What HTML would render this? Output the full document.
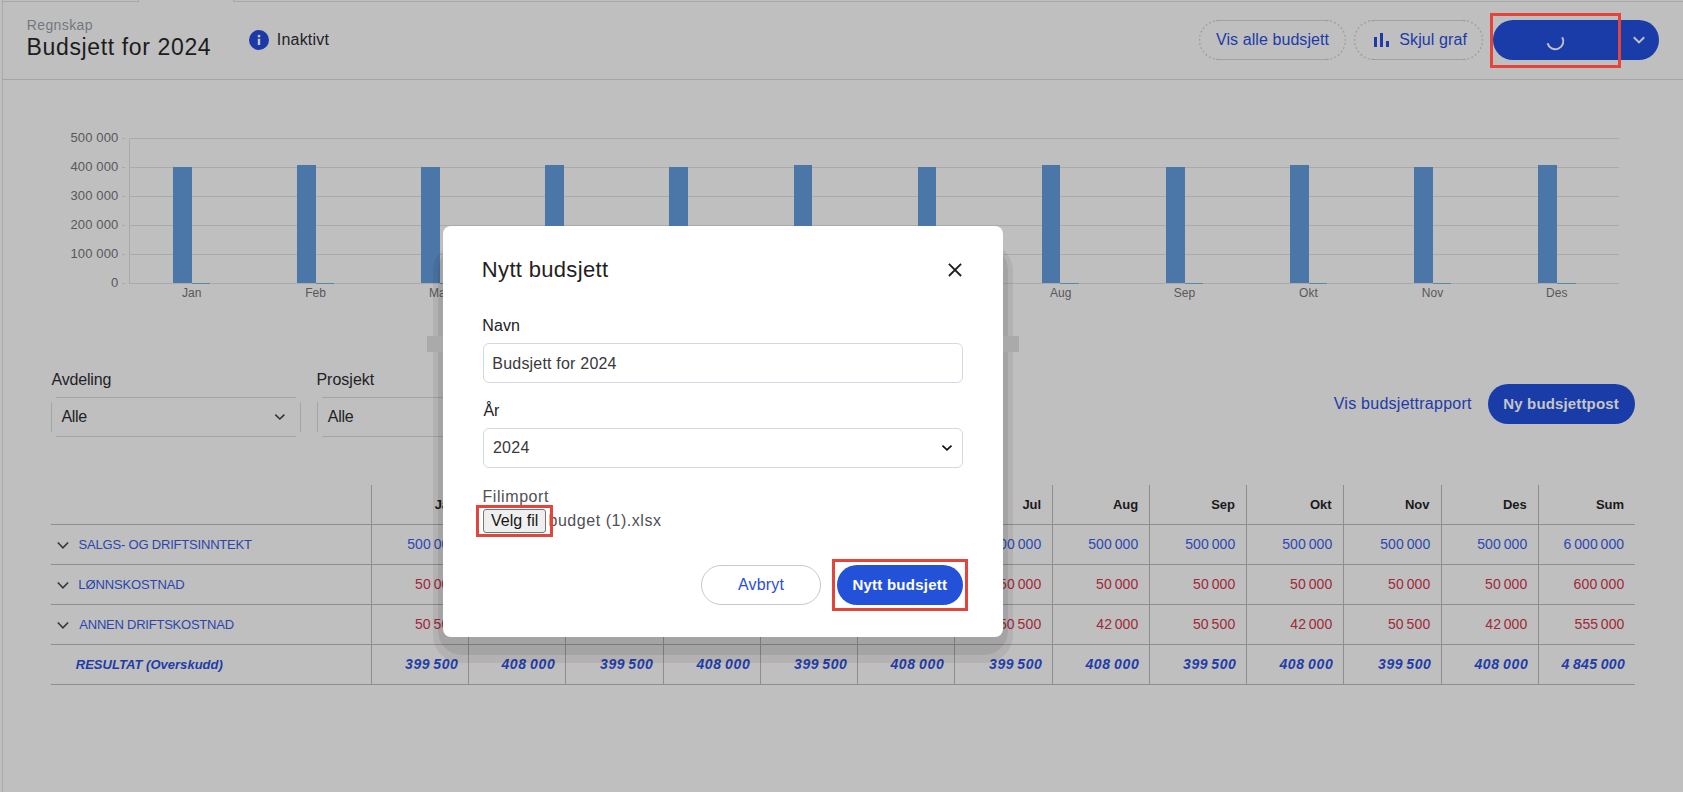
<!DOCTYPE html>
<html><head><meta charset="utf-8"><title>Budsjett</title>
<style>
html,body{margin:0;padding:0;}
body{width:1683px;height:792px;overflow:hidden;position:relative;background:#bfbfbf;font-family:"Liberation Sans",sans-serif;}
.t{position:absolute;white-space:nowrap;}
.r{position:absolute;}
</style></head><body>
<div class="r" style="left:2.00px;top:0.00px;width:1.00px;height:792.00px;background:#a9a9a9;border-radius:0px;"></div>
<div class="r" style="left:2.00px;top:1.00px;width:137.00px;height:1.00px;background:#a7a7a7;border-radius:0px;"></div>
<div class="r" style="left:138.00px;top:0.00px;width:1.00px;height:2.00px;background:#a7a7a7;border-radius:0px;"></div>
<div class="r" style="left:233.00px;top:1.00px;width:1450.00px;height:1.00px;background:#a7a7a7;border-radius:0px;"></div>
<div class="r" style="left:233.00px;top:0.00px;width:1.00px;height:2.00px;background:#a7a7a7;border-radius:0px;"></div>
<div class="r" style="left:2.00px;top:79.00px;width:1681.00px;height:1.00px;background:#a5a5a5;border-radius:0px;"></div>
<div class="t" style="left:26.70px;top:18px;font-size:14px;line-height:14px;color:#737881;font-weight:normal;font-style:normal;letter-spacing:0.400px;">Regnskap</div>
<div class="t" style="left:26.55px;top:36px;font-size:23px;line-height:23px;color:#1c1c1e;font-weight:normal;font-style:normal;letter-spacing:0.637px;">Budsjett for 2024</div>
<svg class="r" style="left:249px;top:30px" width="20" height="20" viewBox="0 0 20 20"><circle cx="10" cy="10" r="10" fill="#1b3aa8"/><rect x="8.8" y="4.9" width="2.4" height="2.4" fill="#c4c4c4"/><rect x="8.8" y="8.7" width="2.4" height="6.3" fill="#c4c4c4"/></svg>
<div class="t" style="left:276.75px;top:32px;font-size:16px;line-height:16px;color:#222226;font-weight:normal;font-style:normal;letter-spacing:0.214px;">Inaktivt</div>
<svg class="r" style="left:1199px;top:20px" width="147" height="40" viewBox="0 0 147 40"><path d="M 17.0 0.5 L 130.0 0.5 M 17.0 39.5 L 130.0 39.5" stroke="#a2a2a2" stroke-width="1" fill="none"/><path d="M 20.0 0.5 A 19.5 19.5 0 0 0 20.0 39.5 M 127.0 0.5 A 19.5 19.5 0 0 1 127.0 39.5" stroke="#9c9c9c" stroke-width="1.3" fill="none" stroke-dasharray="1.8 2.4"/></svg>
<div class="t" style="left:1216.00px;top:32px;font-size:16px;line-height:16px;color:#1d3aa8;font-weight:normal;font-style:normal;letter-spacing:0.078px;">Vis alle budsjett</div>
<svg class="r" style="left:1354px;top:20px" width="129" height="40" viewBox="0 0 129 40"><path d="M 17.0 0.5 L 112.0 0.5 M 17.0 39.5 L 112.0 39.5" stroke="#a2a2a2" stroke-width="1" fill="none"/><path d="M 20.0 0.5 A 19.5 19.5 0 0 0 20.0 39.5 M 109.0 0.5 A 19.5 19.5 0 0 1 109.0 39.5" stroke="#9c9c9c" stroke-width="1.3" fill="none" stroke-dasharray="1.8 2.4"/></svg>
<div class="r" style="left:1374.00px;top:36.70px;width:3.00px;height:10.30px;background:#1d3aa8;border-radius:0px;"></div>
<div class="r" style="left:1380.00px;top:33.00px;width:3.00px;height:14.00px;background:#1d3aa8;border-radius:0px;"></div>
<div class="r" style="left:1386.00px;top:40.80px;width:3.00px;height:6.20px;background:#1d3aa8;border-radius:0px;"></div>
<div class="t" style="left:1399.25px;top:32px;font-size:16px;line-height:16px;color:#1d3aa8;font-weight:normal;font-style:normal;letter-spacing:0.111px;">Skjul graf</div>
<div class="r" style="left:1493.00px;top:20.00px;width:166.00px;height:40.00px;background:#1a3ca8;border-radius:20px;"></div>
<svg class="r" style="left:1540px;top:26px" width="30" height="30" viewBox="0 0 30 30"><path d="M 22.2 11.2 A 8 8 0 1 1 7.57 17.27" fill="none" stroke="#c2c2c2" stroke-width="2"/></svg>
<svg class="r" style="left:1629px;top:30px" width="20" height="20" viewBox="0 0 20 20"><path d="M 4.8 7.2 L 10 12.4 L 15.2 7.2" fill="none" stroke="#c2c2c2" stroke-width="2"/></svg>
<div class="r" style="left:129.00px;top:138.00px;width:1490.00px;height:1.00px;background:#aaaaaa;border-radius:0px;"></div>
<div class="r" style="left:122.00px;top:138.00px;width:3.00px;height:1.00px;background:#aaaaaa;border-radius:0px;"></div>
<div class="t" style="left:70.40px;top:131px;font-size:13px;line-height:13px;color:#58585a;font-weight:normal;font-style:normal;letter-spacing:0.150px;">500 000</div>
<div class="r" style="left:129.00px;top:167.00px;width:1490.00px;height:1.00px;background:#aaaaaa;border-radius:0px;"></div>
<div class="r" style="left:122.00px;top:167.00px;width:3.00px;height:1.00px;background:#aaaaaa;border-radius:0px;"></div>
<div class="t" style="left:70.40px;top:160px;font-size:13px;line-height:13px;color:#58585a;font-weight:normal;font-style:normal;letter-spacing:0.150px;">400 000</div>
<div class="r" style="left:129.00px;top:196.00px;width:1490.00px;height:1.00px;background:#aaaaaa;border-radius:0px;"></div>
<div class="r" style="left:122.00px;top:196.00px;width:3.00px;height:1.00px;background:#aaaaaa;border-radius:0px;"></div>
<div class="t" style="left:70.40px;top:189px;font-size:13px;line-height:13px;color:#58585a;font-weight:normal;font-style:normal;letter-spacing:0.150px;">300 000</div>
<div class="r" style="left:129.00px;top:225.00px;width:1490.00px;height:1.00px;background:#aaaaaa;border-radius:0px;"></div>
<div class="r" style="left:122.00px;top:225.00px;width:3.00px;height:1.00px;background:#aaaaaa;border-radius:0px;"></div>
<div class="t" style="left:70.40px;top:218px;font-size:13px;line-height:13px;color:#58585a;font-weight:normal;font-style:normal;letter-spacing:0.150px;">200 000</div>
<div class="r" style="left:129.00px;top:254.00px;width:1490.00px;height:1.00px;background:#aaaaaa;border-radius:0px;"></div>
<div class="r" style="left:122.00px;top:254.00px;width:3.00px;height:1.00px;background:#aaaaaa;border-radius:0px;"></div>
<div class="t" style="left:70.40px;top:247px;font-size:13px;line-height:13px;color:#58585a;font-weight:normal;font-style:normal;letter-spacing:0.150px;">100 000</div>
<div class="r" style="left:129.00px;top:283.00px;width:1490.00px;height:1.00px;background:#aaaaaa;border-radius:0px;"></div>
<div class="r" style="left:122.00px;top:283.00px;width:3.00px;height:1.00px;background:#aaaaaa;border-radius:0px;"></div>
<div class="t" style="left:111.05px;top:276px;font-size:13px;line-height:13px;color:#58585a;font-weight:normal;font-style:normal;letter-spacing:0.150px;">0</div>
<div class="r" style="left:129.00px;top:138.00px;width:1.00px;height:146.00px;background:#aaaaaa;border-radius:0px;"></div>
<div class="r" style="left:172.96px;top:167.20px;width:18.60px;height:116.30px;background:#4a77a7;border-radius:0px;"></div>
<div class="r" style="left:191.56px;top:283.00px;width:18.60px;height:1.00px;background:#5a8aa0;border-radius:0px;"></div>
<div class="t" style="left:182.06px;top:287px;font-size:12px;line-height:12px;color:#58585a;font-weight:normal;font-style:normal;letter-spacing:0.000px;">Jan</div>
<div class="r" style="left:297.09px;top:164.70px;width:18.60px;height:118.80px;background:#4a77a7;border-radius:0px;"></div>
<div class="r" style="left:315.69px;top:283.00px;width:18.60px;height:1.00px;background:#5a8aa0;border-radius:0px;"></div>
<div class="t" style="left:305.19px;top:287px;font-size:12px;line-height:12px;color:#58585a;font-weight:normal;font-style:normal;letter-spacing:0.000px;">Feb</div>
<div class="r" style="left:421.21px;top:167.20px;width:18.60px;height:116.30px;background:#4a77a7;border-radius:0px;"></div>
<div class="r" style="left:439.81px;top:283.00px;width:18.60px;height:1.00px;background:#5a8aa0;border-radius:0px;"></div>
<div class="t" style="left:429.06px;top:287px;font-size:12px;line-height:12px;color:#58585a;font-weight:normal;font-style:normal;letter-spacing:0.000px;">Mar</div>
<div class="r" style="left:545.34px;top:164.70px;width:18.60px;height:118.80px;background:#4a77a7;border-radius:0px;"></div>
<div class="r" style="left:563.94px;top:283.00px;width:18.60px;height:1.00px;background:#5a8aa0;border-radius:0px;"></div>
<div class="t" style="left:554.56px;top:287px;font-size:12px;line-height:12px;color:#58585a;font-weight:normal;font-style:normal;letter-spacing:0.000px;">Apr</div>
<div class="r" style="left:669.46px;top:167.20px;width:18.60px;height:116.30px;background:#4a77a7;border-radius:0px;"></div>
<div class="r" style="left:688.06px;top:283.00px;width:18.60px;height:1.00px;background:#5a8aa0;border-radius:0px;"></div>
<div class="t" style="left:678.31px;top:287px;font-size:12px;line-height:12px;color:#58585a;font-weight:normal;font-style:normal;letter-spacing:0.000px;">Mai</div>
<div class="r" style="left:793.59px;top:164.70px;width:18.60px;height:118.80px;background:#4a77a7;border-radius:0px;"></div>
<div class="r" style="left:812.19px;top:283.00px;width:18.60px;height:1.00px;background:#5a8aa0;border-radius:0px;"></div>
<div class="t" style="left:802.69px;top:287px;font-size:12px;line-height:12px;color:#58585a;font-weight:normal;font-style:normal;letter-spacing:0.000px;">Jun</div>
<div class="r" style="left:917.71px;top:167.20px;width:18.60px;height:116.30px;background:#4a77a7;border-radius:0px;"></div>
<div class="r" style="left:936.31px;top:283.00px;width:18.60px;height:1.00px;background:#5a8aa0;border-radius:0px;"></div>
<div class="t" style="left:928.81px;top:287px;font-size:12px;line-height:12px;color:#58585a;font-weight:normal;font-style:normal;letter-spacing:0.000px;">Jul</div>
<div class="r" style="left:1041.84px;top:164.70px;width:18.60px;height:118.80px;background:#4a77a7;border-radius:0px;"></div>
<div class="r" style="left:1060.44px;top:283.00px;width:18.60px;height:1.00px;background:#5a8aa0;border-radius:0px;"></div>
<div class="t" style="left:1050.06px;top:287px;font-size:12px;line-height:12px;color:#58585a;font-weight:normal;font-style:normal;letter-spacing:0.000px;">Aug</div>
<div class="r" style="left:1165.96px;top:167.20px;width:18.60px;height:116.30px;background:#4a77a7;border-radius:0px;"></div>
<div class="r" style="left:1184.56px;top:283.00px;width:18.60px;height:1.00px;background:#5a8aa0;border-radius:0px;"></div>
<div class="t" style="left:1173.81px;top:287px;font-size:12px;line-height:12px;color:#58585a;font-weight:normal;font-style:normal;letter-spacing:0.000px;">Sep</div>
<div class="r" style="left:1290.09px;top:164.70px;width:18.60px;height:118.80px;background:#4a77a7;border-radius:0px;"></div>
<div class="r" style="left:1308.69px;top:283.00px;width:18.60px;height:1.00px;background:#5a8aa0;border-radius:0px;"></div>
<div class="t" style="left:1299.06px;top:287px;font-size:12px;line-height:12px;color:#58585a;font-weight:normal;font-style:normal;letter-spacing:0.000px;">Okt</div>
<div class="r" style="left:1414.21px;top:167.20px;width:18.60px;height:116.30px;background:#4a77a7;border-radius:0px;"></div>
<div class="r" style="left:1432.81px;top:283.00px;width:18.60px;height:1.00px;background:#5a8aa0;border-radius:0px;"></div>
<div class="t" style="left:1421.81px;top:287px;font-size:12px;line-height:12px;color:#58585a;font-weight:normal;font-style:normal;letter-spacing:0.000px;">Nov</div>
<div class="r" style="left:1538.34px;top:164.70px;width:18.60px;height:118.80px;background:#4a77a7;border-radius:0px;"></div>
<div class="r" style="left:1556.94px;top:283.00px;width:18.60px;height:1.00px;background:#5a8aa0;border-radius:0px;"></div>
<div class="t" style="left:1546.06px;top:287px;font-size:12px;line-height:12px;color:#58585a;font-weight:normal;font-style:normal;letter-spacing:0.000px;">Des</div>
<div class="t" style="left:51.60px;top:372px;font-size:16px;line-height:16px;color:#222226;font-weight:normal;font-style:normal;letter-spacing:-0.193px;">Avdeling</div>
<div class="r" style="left:56.00px;top:397.00px;width:240.00px;height:1.00px;background:#a5a5a5;border-radius:0px;"></div>
<div class="r" style="left:56.00px;top:436.00px;width:240.00px;height:1.00px;background:#a5a5a5;border-radius:0px;"></div>
<div class="r" style="left:51.00px;top:402.00px;width:1.00px;height:30.00px;background:#a5a5a5;border-radius:0px;"></div>
<div class="r" style="left:300.00px;top:402.00px;width:1.00px;height:30.00px;background:#a5a5a5;border-radius:0px;"></div>
<div class="t" style="left:61.40px;top:409px;font-size:16px;line-height:16px;color:#222226;font-weight:normal;font-style:normal;letter-spacing:-0.300px;">Alle</div>
<svg class="r" style="left:270px;top:407px" width="20" height="20" viewBox="0 0 20 20"><path d="M 5.3 7.7 L 9.85 12.0 L 14.4 7.7" fill="none" stroke="#333" stroke-width="1.6"/></svg>
<div class="t" style="left:316.45px;top:372px;font-size:16px;line-height:16px;color:#222226;font-weight:normal;font-style:normal;letter-spacing:0.000px;">Prosjekt</div>
<div class="r" style="left:322.00px;top:397.00px;width:240.00px;height:1.00px;background:#a5a5a5;border-radius:0px;"></div>
<div class="r" style="left:322.00px;top:436.00px;width:240.00px;height:1.00px;background:#a5a5a5;border-radius:0px;"></div>
<div class="r" style="left:317.00px;top:402.00px;width:1.00px;height:30.00px;background:#a5a5a5;border-radius:0px;"></div>
<div class="r" style="left:566.00px;top:402.00px;width:1.00px;height:30.00px;background:#a5a5a5;border-radius:0px;"></div>
<div class="t" style="left:327.80px;top:409px;font-size:16px;line-height:16px;color:#222226;font-weight:normal;font-style:normal;letter-spacing:-0.300px;">Alle</div>
<div class="t" style="left:1333.70px;top:396px;font-size:16px;line-height:16px;color:#1d3aa8;font-weight:normal;font-style:normal;letter-spacing:0.261px;">Vis budsjettrapport</div>
<div class="r" style="left:1488.00px;top:384.00px;width:147.00px;height:40.00px;background:#1a3ca8;border-radius:20px;"></div>
<div class="t" style="left:1503.30px;top:396px;font-size:15px;line-height:15px;color:#c6c6c6;font-weight:bold;font-style:normal;letter-spacing:0.146px;">Ny budsjettpost</div>
<div class="r" style="left:51.00px;top:524.00px;width:1584.00px;height:1.00px;background:#8e8e8e;border-radius:0px;"></div>
<div class="r" style="left:51.00px;top:564.00px;width:1584.00px;height:1.00px;background:#8e8e8e;border-radius:0px;"></div>
<div class="r" style="left:51.00px;top:604.00px;width:1584.00px;height:1.00px;background:#8e8e8e;border-radius:0px;"></div>
<div class="r" style="left:51.00px;top:644.00px;width:1584.00px;height:1.00px;background:#8e8e8e;border-radius:0px;"></div>
<div class="r" style="left:51.00px;top:684.00px;width:1584.00px;height:1.00px;background:#8e8e8e;border-radius:0px;"></div>
<div class="r" style="left:371.00px;top:485.00px;width:1.00px;height:199.00px;background:#8e8e8e;border-radius:0px;"></div>
<div class="r" style="left:468.00px;top:485.00px;width:1.00px;height:199.00px;background:#8e8e8e;border-radius:0px;"></div>
<div class="r" style="left:565.00px;top:485.00px;width:1.00px;height:199.00px;background:#8e8e8e;border-radius:0px;"></div>
<div class="r" style="left:663.00px;top:485.00px;width:1.00px;height:199.00px;background:#8e8e8e;border-radius:0px;"></div>
<div class="r" style="left:760.00px;top:485.00px;width:1.00px;height:199.00px;background:#8e8e8e;border-radius:0px;"></div>
<div class="r" style="left:857.00px;top:485.00px;width:1.00px;height:199.00px;background:#8e8e8e;border-radius:0px;"></div>
<div class="r" style="left:954.00px;top:485.00px;width:1.00px;height:199.00px;background:#8e8e8e;border-radius:0px;"></div>
<div class="r" style="left:1052.00px;top:485.00px;width:1.00px;height:199.00px;background:#8e8e8e;border-radius:0px;"></div>
<div class="r" style="left:1149.00px;top:485.00px;width:1.00px;height:199.00px;background:#8e8e8e;border-radius:0px;"></div>
<div class="r" style="left:1246.00px;top:485.00px;width:1.00px;height:199.00px;background:#8e8e8e;border-radius:0px;"></div>
<div class="r" style="left:1343.00px;top:485.00px;width:1.00px;height:199.00px;background:#8e8e8e;border-radius:0px;"></div>
<div class="r" style="left:1441.00px;top:485.00px;width:1.00px;height:199.00px;background:#8e8e8e;border-radius:0px;"></div>
<div class="r" style="left:1538.00px;top:485.00px;width:1.00px;height:199.00px;background:#8e8e8e;border-radius:0px;"></div>
<div class="t" style="left:434.65px;top:498px;font-size:13px;line-height:13px;color:#1a1a1c;font-weight:bold;font-style:normal;letter-spacing:0.000px;">Jan</div>
<div class="t" style="left:530.65px;top:498px;font-size:13px;line-height:13px;color:#1a1a1c;font-weight:bold;font-style:normal;letter-spacing:0.000px;">Feb</div>
<div class="t" style="left:628.40px;top:498px;font-size:13px;line-height:13px;color:#1a1a1c;font-weight:bold;font-style:normal;letter-spacing:0.000px;">Mar</div>
<div class="t" style="left:726.15px;top:498px;font-size:13px;line-height:13px;color:#1a1a1c;font-weight:bold;font-style:normal;letter-spacing:0.000px;">Apr</div>
<div class="t" style="left:824.40px;top:498px;font-size:13px;line-height:13px;color:#1a1a1c;font-weight:bold;font-style:normal;letter-spacing:0.000px;">Mai</div>
<div class="t" style="left:919.90px;top:498px;font-size:13px;line-height:13px;color:#1a1a1c;font-weight:bold;font-style:normal;letter-spacing:0.000px;">Jun</div>
<div class="t" style="left:1022.40px;top:498px;font-size:13px;line-height:13px;color:#1a1a1c;font-weight:bold;font-style:normal;letter-spacing:0.000px;">Jul</div>
<div class="t" style="left:1112.90px;top:498px;font-size:13px;line-height:13px;color:#1a1a1c;font-weight:bold;font-style:normal;letter-spacing:0.000px;">Aug</div>
<div class="t" style="left:1211.15px;top:498px;font-size:13px;line-height:13px;color:#1a1a1c;font-weight:bold;font-style:normal;letter-spacing:0.000px;">Sep</div>
<div class="t" style="left:1309.90px;top:498px;font-size:13px;line-height:13px;color:#1a1a1c;font-weight:bold;font-style:normal;letter-spacing:0.000px;">Okt</div>
<div class="t" style="left:1404.90px;top:498px;font-size:13px;line-height:13px;color:#1a1a1c;font-weight:bold;font-style:normal;letter-spacing:0.000px;">Nov</div>
<div class="t" style="left:1502.90px;top:498px;font-size:13px;line-height:13px;color:#1a1a1c;font-weight:bold;font-style:normal;letter-spacing:0.000px;">Des</div>
<div class="t" style="left:1595.90px;top:498px;font-size:13px;line-height:13px;color:#1a1a1c;font-weight:bold;font-style:normal;letter-spacing:0.000px;">Sum</div>
<svg class="r" style="left:53px;top:534px" width="20" height="20" viewBox="0 0 20 20"><path d="M 4.8 8.5 L 9.95 13.8 L 15.1 8.5" fill="none" stroke="#3a3a3a" stroke-width="1.7"/></svg>
<div class="t" style="left:78.55px;top:538px;font-size:13px;line-height:13px;color:#2a46ae;font-weight:normal;font-style:normal;letter-spacing:-0.193px;">SALGS- OG DRIFTSINNTEKT</div>
<div class="t" style="left:407.20px;top:537px;font-size:14px;line-height:14px;color:#2b48b2;font-weight:normal;font-style:normal;letter-spacing:0.083px;">500 000</div>
<div class="t" style="left:504.20px;top:537px;font-size:14px;line-height:14px;color:#2b48b2;font-weight:normal;font-style:normal;letter-spacing:0.083px;">500 000</div>
<div class="t" style="left:602.20px;top:537px;font-size:14px;line-height:14px;color:#2b48b2;font-weight:normal;font-style:normal;letter-spacing:0.083px;">500 000</div>
<div class="t" style="left:699.20px;top:537px;font-size:14px;line-height:14px;color:#2b48b2;font-weight:normal;font-style:normal;letter-spacing:0.083px;">500 000</div>
<div class="t" style="left:796.20px;top:537px;font-size:14px;line-height:14px;color:#2b48b2;font-weight:normal;font-style:normal;letter-spacing:0.083px;">500 000</div>
<div class="t" style="left:893.20px;top:537px;font-size:14px;line-height:14px;color:#2b48b2;font-weight:normal;font-style:normal;letter-spacing:0.083px;">500 000</div>
<div class="t" style="left:991.20px;top:537px;font-size:14px;line-height:14px;color:#2b48b2;font-weight:normal;font-style:normal;letter-spacing:0.083px;">500 000</div>
<div class="t" style="left:1088.20px;top:537px;font-size:14px;line-height:14px;color:#2b48b2;font-weight:normal;font-style:normal;letter-spacing:0.083px;">500 000</div>
<div class="t" style="left:1185.20px;top:537px;font-size:14px;line-height:14px;color:#2b48b2;font-weight:normal;font-style:normal;letter-spacing:0.083px;">500 000</div>
<div class="t" style="left:1282.20px;top:537px;font-size:14px;line-height:14px;color:#2b48b2;font-weight:normal;font-style:normal;letter-spacing:0.083px;">500 000</div>
<div class="t" style="left:1380.20px;top:537px;font-size:14px;line-height:14px;color:#2b48b2;font-weight:normal;font-style:normal;letter-spacing:0.083px;">500 000</div>
<div class="t" style="left:1477.20px;top:537px;font-size:14px;line-height:14px;color:#2b48b2;font-weight:normal;font-style:normal;letter-spacing:0.083px;">500 000</div>
<div class="t" style="left:1563.50px;top:537px;font-size:14px;line-height:14px;color:#2b48b2;font-weight:normal;font-style:normal;letter-spacing:0.056px;">6 000 000</div>
<svg class="r" style="left:53px;top:574px" width="20" height="20" viewBox="0 0 20 20"><path d="M 4.8 8.5 L 9.95 13.8 L 15.1 8.5" fill="none" stroke="#3a3a3a" stroke-width="1.7"/></svg>
<div class="t" style="left:78.30px;top:578px;font-size:13px;line-height:13px;color:#2a46ae;font-weight:normal;font-style:normal;letter-spacing:-0.118px;">LØNNSKOSTNAD</div>
<div class="t" style="left:415.00px;top:577px;font-size:14px;line-height:14px;color:#a0283a;font-weight:normal;font-style:normal;letter-spacing:0.090px;">50 000</div>
<div class="t" style="left:512.00px;top:577px;font-size:14px;line-height:14px;color:#a0283a;font-weight:normal;font-style:normal;letter-spacing:0.090px;">50 000</div>
<div class="t" style="left:610.00px;top:577px;font-size:14px;line-height:14px;color:#a0283a;font-weight:normal;font-style:normal;letter-spacing:0.090px;">50 000</div>
<div class="t" style="left:707.00px;top:577px;font-size:14px;line-height:14px;color:#a0283a;font-weight:normal;font-style:normal;letter-spacing:0.090px;">50 000</div>
<div class="t" style="left:804.00px;top:577px;font-size:14px;line-height:14px;color:#a0283a;font-weight:normal;font-style:normal;letter-spacing:0.090px;">50 000</div>
<div class="t" style="left:901.00px;top:577px;font-size:14px;line-height:14px;color:#a0283a;font-weight:normal;font-style:normal;letter-spacing:0.090px;">50 000</div>
<div class="t" style="left:999.00px;top:577px;font-size:14px;line-height:14px;color:#a0283a;font-weight:normal;font-style:normal;letter-spacing:0.090px;">50 000</div>
<div class="t" style="left:1096.00px;top:577px;font-size:14px;line-height:14px;color:#a0283a;font-weight:normal;font-style:normal;letter-spacing:0.090px;">50 000</div>
<div class="t" style="left:1193.00px;top:577px;font-size:14px;line-height:14px;color:#a0283a;font-weight:normal;font-style:normal;letter-spacing:0.090px;">50 000</div>
<div class="t" style="left:1290.00px;top:577px;font-size:14px;line-height:14px;color:#a0283a;font-weight:normal;font-style:normal;letter-spacing:0.090px;">50 000</div>
<div class="t" style="left:1388.00px;top:577px;font-size:14px;line-height:14px;color:#a0283a;font-weight:normal;font-style:normal;letter-spacing:0.090px;">50 000</div>
<div class="t" style="left:1485.00px;top:577px;font-size:14px;line-height:14px;color:#a0283a;font-weight:normal;font-style:normal;letter-spacing:0.090px;">50 000</div>
<div class="t" style="left:1573.50px;top:577px;font-size:14px;line-height:14px;color:#a0283a;font-weight:normal;font-style:normal;letter-spacing:0.200px;">600 000</div>
<svg class="r" style="left:53px;top:614px" width="20" height="20" viewBox="0 0 20 20"><path d="M 4.8 8.5 L 9.95 13.8 L 15.1 8.5" fill="none" stroke="#3a3a3a" stroke-width="1.7"/></svg>
<div class="t" style="left:79.30px;top:618px;font-size:13px;line-height:13px;color:#2a46ae;font-weight:normal;font-style:normal;letter-spacing:-0.231px;">ANNEN DRIFTSKOSTNAD</div>
<div class="t" style="left:414.90px;top:617px;font-size:14px;line-height:14px;color:#a0283a;font-weight:normal;font-style:normal;letter-spacing:0.110px;">50 500</div>
<div class="t" style="left:512.35px;top:617px;font-size:14px;line-height:14px;color:#a0283a;font-weight:normal;font-style:normal;letter-spacing:0.020px;">42 000</div>
<div class="t" style="left:609.90px;top:617px;font-size:14px;line-height:14px;color:#a0283a;font-weight:normal;font-style:normal;letter-spacing:0.110px;">50 500</div>
<div class="t" style="left:707.35px;top:617px;font-size:14px;line-height:14px;color:#a0283a;font-weight:normal;font-style:normal;letter-spacing:0.020px;">42 000</div>
<div class="t" style="left:803.90px;top:617px;font-size:14px;line-height:14px;color:#a0283a;font-weight:normal;font-style:normal;letter-spacing:0.110px;">50 500</div>
<div class="t" style="left:901.35px;top:617px;font-size:14px;line-height:14px;color:#a0283a;font-weight:normal;font-style:normal;letter-spacing:0.020px;">42 000</div>
<div class="t" style="left:998.90px;top:617px;font-size:14px;line-height:14px;color:#a0283a;font-weight:normal;font-style:normal;letter-spacing:0.110px;">50 500</div>
<div class="t" style="left:1096.35px;top:617px;font-size:14px;line-height:14px;color:#a0283a;font-weight:normal;font-style:normal;letter-spacing:0.020px;">42 000</div>
<div class="t" style="left:1192.90px;top:617px;font-size:14px;line-height:14px;color:#a0283a;font-weight:normal;font-style:normal;letter-spacing:0.110px;">50 500</div>
<div class="t" style="left:1290.35px;top:617px;font-size:14px;line-height:14px;color:#a0283a;font-weight:normal;font-style:normal;letter-spacing:0.020px;">42 000</div>
<div class="t" style="left:1387.90px;top:617px;font-size:14px;line-height:14px;color:#a0283a;font-weight:normal;font-style:normal;letter-spacing:0.110px;">50 500</div>
<div class="t" style="left:1485.35px;top:617px;font-size:14px;line-height:14px;color:#a0283a;font-weight:normal;font-style:normal;letter-spacing:0.020px;">42 000</div>
<div class="t" style="left:1574.60px;top:617px;font-size:14px;line-height:14px;color:#a0283a;font-weight:normal;font-style:normal;letter-spacing:0.017px;">555 000</div>
<div class="t" style="left:75.75px;top:658px;font-size:13px;line-height:13px;color:#1f3ca8;font-weight:bold;font-style:italic;letter-spacing:0.026px;">RESULTAT (Overskudd)</div>
<div class="t" style="left:405.10px;top:657px;font-size:14px;line-height:14px;color:#1f3ca8;font-weight:bold;font-style:italic;letter-spacing:0.517px;">399 500</div>
<div class="t" style="left:501.45px;top:657px;font-size:14px;line-height:14px;color:#1f3ca8;font-weight:bold;font-style:italic;letter-spacing:0.625px;">408 000</div>
<div class="t" style="left:600.10px;top:657px;font-size:14px;line-height:14px;color:#1f3ca8;font-weight:bold;font-style:italic;letter-spacing:0.517px;">399 500</div>
<div class="t" style="left:696.45px;top:657px;font-size:14px;line-height:14px;color:#1f3ca8;font-weight:bold;font-style:italic;letter-spacing:0.625px;">408 000</div>
<div class="t" style="left:794.10px;top:657px;font-size:14px;line-height:14px;color:#1f3ca8;font-weight:bold;font-style:italic;letter-spacing:0.517px;">399 500</div>
<div class="t" style="left:890.45px;top:657px;font-size:14px;line-height:14px;color:#1f3ca8;font-weight:bold;font-style:italic;letter-spacing:0.625px;">408 000</div>
<div class="t" style="left:989.10px;top:657px;font-size:14px;line-height:14px;color:#1f3ca8;font-weight:bold;font-style:italic;letter-spacing:0.517px;">399 500</div>
<div class="t" style="left:1085.45px;top:657px;font-size:14px;line-height:14px;color:#1f3ca8;font-weight:bold;font-style:italic;letter-spacing:0.625px;">408 000</div>
<div class="t" style="left:1183.10px;top:657px;font-size:14px;line-height:14px;color:#1f3ca8;font-weight:bold;font-style:italic;letter-spacing:0.517px;">399 500</div>
<div class="t" style="left:1279.45px;top:657px;font-size:14px;line-height:14px;color:#1f3ca8;font-weight:bold;font-style:italic;letter-spacing:0.625px;">408 000</div>
<div class="t" style="left:1378.10px;top:657px;font-size:14px;line-height:14px;color:#1f3ca8;font-weight:bold;font-style:italic;letter-spacing:0.517px;">399 500</div>
<div class="t" style="left:1474.45px;top:657px;font-size:14px;line-height:14px;color:#1f3ca8;font-weight:bold;font-style:italic;letter-spacing:0.625px;">408 000</div>
<div class="t" style="left:1561.55px;top:657px;font-size:14px;line-height:14px;color:#1f3ca8;font-weight:bold;font-style:italic;letter-spacing:0.394px;">4 845 000</div>
<div class="r" style="left:433.00px;top:243.00px;width:580.00px;height:420.00px;background:rgba(25,0,0,0.07);border-radius:28px;"></div>
<div class="r" style="left:438.00px;top:246.00px;width:570.00px;height:409.00px;background:rgba(0,8,25,0.075);border-radius:24px;"></div>
<div class="r" style="left:427.00px;top:336.00px;width:16.00px;height:16.00px;background:#aaaaab;border-radius:0px;"></div>
<div class="r" style="left:1003.00px;top:336.00px;width:16.00px;height:16.00px;background:#aaaaab;border-radius:0px;"></div>
<div class="r" style="left:443.00px;top:226.00px;width:560.00px;height:411.00px;background:#ffffff;border-radius:8px;"></div>
<div class="t" style="left:481.85px;top:259px;font-size:22px;line-height:22px;color:#1f1f22;font-weight:normal;font-style:normal;letter-spacing:0.325px;">Nytt budsjett</div>
<svg class="r" style="left:945px;top:260px" width="20" height="20" viewBox="0 0 20 20"><path d="M 3.9 3.9 L 16.1 16.0 M 16.1 3.9 L 3.9 16.0" fill="none" stroke="#222" stroke-width="1.9"/></svg>
<div class="t" style="left:482.35px;top:318px;font-size:16px;line-height:16px;color:#222226;font-weight:normal;font-style:normal;letter-spacing:0.050px;">Navn</div>
<div class="r" style="left:483.00px;top:343.00px;width:480.00px;height:40.00px;background:#fff;border:1px solid #d3d9e3;box-sizing:border-box;border-radius:6px;"></div>
<div class="t" style="left:492.35px;top:356px;font-size:16px;line-height:16px;color:#38383b;font-weight:normal;font-style:normal;letter-spacing:0.197px;">Budsjett for 2024</div>
<div class="t" style="left:483.60px;top:403px;font-size:16px;line-height:16px;color:#222226;font-weight:normal;font-style:normal;letter-spacing:-0.350px;">År</div>
<div class="r" style="left:483.00px;top:428.00px;width:480.00px;height:40.00px;background:#fff;border:1px solid #d3d9e3;box-sizing:border-box;border-radius:6px;"></div>
<div class="t" style="left:492.95px;top:440px;font-size:16px;line-height:16px;color:#38383b;font-weight:normal;font-style:normal;letter-spacing:0.267px;">2024</div>
<svg class="r" style="left:937px;top:438px" width="20" height="20" viewBox="0 0 20 20"><path d="M 5.5 7.6 L 10 11.9 L 14.5 7.6" fill="none" stroke="#111" stroke-width="1.7"/></svg>
<div class="t" style="left:482.45px;top:489px;font-size:16px;line-height:16px;color:#505055;font-weight:normal;font-style:normal;letter-spacing:0.587px;">Filimport</div>
<div class="r" style="left:483.00px;top:509.00px;width:63.00px;height:24.00px;background:#efefef;border:1px solid #767676;box-sizing:border-box;border-radius:3px;"></div>
<div class="t" style="left:491.00px;top:513px;font-size:16px;line-height:16px;color:#151515;font-weight:normal;font-style:normal;letter-spacing:0.036px;">Velg fil</div>
<div class="t" style="left:548.50px;top:513px;font-size:16px;line-height:16px;color:#505055;font-weight:normal;font-style:normal;letter-spacing:0.539px;">budget (1).xlsx</div>
<div class="r" style="left:701.00px;top:565.00px;width:120.00px;height:40.00px;background:#fff;border:1px solid #c9c9c9;box-sizing:border-box;border-radius:20px;"></div>
<div class="t" style="left:737.90px;top:577px;font-size:16px;line-height:16px;color:#2a4fd6;font-weight:normal;font-style:normal;letter-spacing:0.200px;">Avbryt</div>
<div class="r" style="left:837.00px;top:565.00px;width:126.00px;height:40.00px;background:#2352d9;border-radius:20px;"></div>
<div class="t" style="left:852.40px;top:577px;font-size:15px;line-height:15px;color:#ffffff;font-weight:bold;font-style:normal;letter-spacing:0.242px;">Nytt budsjett</div>
<div class="r" style="left:476.00px;top:505.00px;width:77.00px;height:32.00px;background:transparent;border:3px solid #e5443b;box-sizing:border-box;border-radius:0px;"></div>
<div class="r" style="left:832.00px;top:559.00px;width:136.00px;height:52.00px;background:transparent;border:3px solid #e5443b;box-sizing:border-box;border-radius:0px;"></div>
<div class="r" style="left:1490.00px;top:13.00px;width:131.00px;height:55.00px;background:transparent;border:3px solid #e5443b;box-sizing:border-box;border-radius:0px;"></div>
</body></html>
